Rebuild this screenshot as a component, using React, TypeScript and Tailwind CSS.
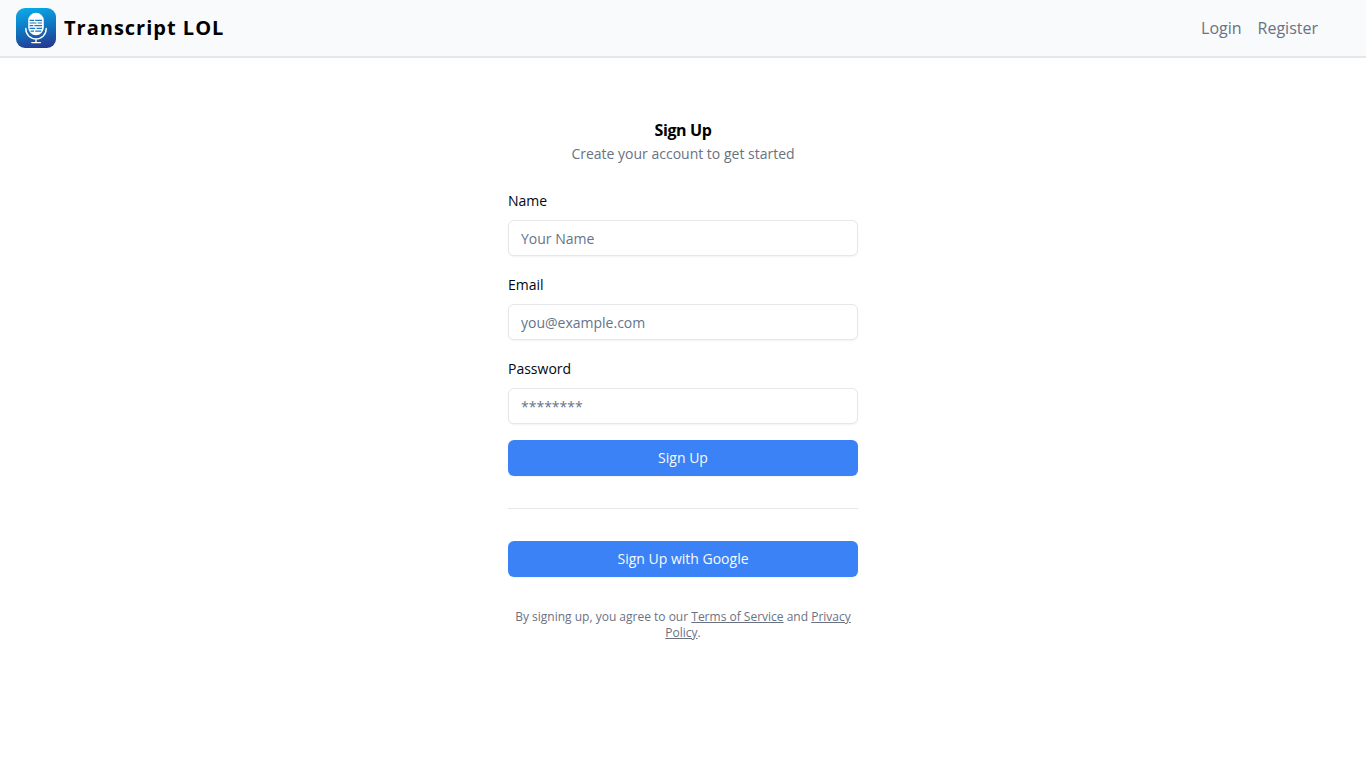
import React from "react";

function Logo() {
  return (
    <svg viewBox="0 0 40 40" className="size-10 shrink-0" aria-hidden="true">
      <defs>
        <linearGradient id="logo-bg" x1="0.4" y1="0" x2="0.6" y2="1">
          <stop offset="0" stopColor="#0ba6e4" />
          <stop offset="0.5" stopColor="#0f74c0" />
          <stop offset="1" stopColor="#263a92" />
        </linearGradient>
      </defs>
      <rect width="40" height="40" rx="9" fill="url(#logo-bg)" />
      <rect x="12.2" y="4.8" width="15.6" height="22.4" rx="7.8" fill="#fff" />
      <g stroke="#1578c2" strokeWidth="1.2">
        <path d="M13.6 12.3h4.600M19.200 12.300h6.800" />
        <path d="M13.600 15h6.800M21.600 15h4.400" />
        <path d="M13.600 17.700h3.600M18.400 17.700h7.600" />
        <path d="M13.600 20.400h5.600M20.600 20.400h5.400" />
        <path d="M14.600 23.100h3.400M19.200 23.100h6" />
      </g>
      <path
        d="M9.800 20.500c0 6.200 4.300 10.400 10.200 10.400s10.200-4.200 10.200-10.400M20 30.900v3.600M15.800 34.600h8.600"
        fill="none"
        stroke="#fff"
        strokeWidth="1.4"
        strokeLinecap="round"
      />
    </svg>
  );
}

type FieldProps = {
  id: string;
  label: string;
  type: string;
  placeholder: string;
};

function Field({ id, label, type, placeholder }: FieldProps) {
  return (
    <div className="flex flex-col gap-2">
      <div>
        <label htmlFor={id} className="text-sm leading-none text-gray-950">
          {label}
        </label>
      </div>
      <input
        id={id}
        name={id}
        type={type}
        placeholder={placeholder}
        className="h-9 w-full rounded-md border border-gray-200 bg-white px-3 py-1 text-sm shadow-xs placeholder:text-[#64748b] focus:outline-none focus:ring-1 focus:ring-blue-500"
      />
    </div>
  );
}

const buttonClass =
  "h-9 w-full cursor-pointer rounded-md bg-[#3b82f6] px-4 text-sm text-slate-50 shadow-xs hover:bg-blue-600";

export default function App() {
  return (
    <div className="min-h-screen bg-white font-['Open_Sans',sans-serif] text-gray-950">
      <header className="flex items-center justify-between border-b-2 border-gray-200 bg-[#f8fafc] py-2 pr-12 pl-4">
        <a href="#" className="flex items-center gap-2">
          <Logo />
          <span className="text-xl font-bold tracking-wider text-black">Transcript LOL</span>
        </a>
        <nav className="flex gap-4 text-base text-gray-500">
          <a href="#login">Login</a>
          <a href="#register">Register</a>
        </nav>
      </header>

      <main className="mx-auto flex w-full max-w-[350px] flex-col gap-6 pt-[60px] pb-8">
        <div className="flex flex-col gap-0.5 text-center">
          <h1 className="text-base font-bold tracking-tight text-black">Sign Up</h1>
          <p className="text-sm text-gray-500">Create your account to get started</p>
        </div>
        <div className="flex flex-col gap-8">
          <form className="flex flex-col gap-4" onSubmit={(e) => e.preventDefault()}>
            <Field id="name" label="Name" type="text" placeholder="Your Name" />
            <Field id="email" label="Email" type="email" placeholder="you@example.com" />
            <Field id="password" label="Password" type="password" placeholder="********" />
            <button type="submit" className={buttonClass}>
              Sign Up
            </button>
          </form>
          <hr className="border-gray-200" />
          <button type="button" className={buttonClass}>
            Sign Up with Google
          </button>
          <p className="text-center text-xs text-gray-500">
            By signing up, you agree to our{" "}
            <a href="#terms" className="underline">
              Terms of Service
            </a>{" "}
            and{" "}
            <a href="#privacy" className="underline">
              Privacy Policy
            </a>
            .
          </p>
        </div>
      </main>
    </div>
  );
}
